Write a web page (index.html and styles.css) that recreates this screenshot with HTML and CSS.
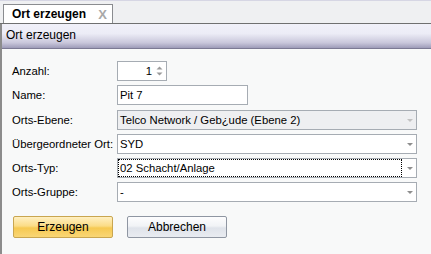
FILE: index.html
```html
<!DOCTYPE html>
<html lang="de">
<head>
    <meta charset="UTF-8">
    <title>Ort erzeugen</title>
    <link rel="stylesheet" href="styles.css">
</head>
<body>
    <div class="tabstrip">
        <div class="tab">
            <span class="tab-title">Ort erzeugen</span>
            <span class="tab-close">X</span>
        </div>
    </div>
    <div class="panel">
        <div class="panel-header">Ort erzeugen</div>
        <form class="panel-body">
            <div class="rows">
                <div class="row">
                    <label>Anzahl:</label>
                    <div class="box spinner">
                        <span class="spin-value">1</span>
                        <span class="spin-arrows">
                            <svg width="7" height="12" viewBox="0 0 7 12">
                                <path d="M0.5 4.5 L3.5 1.5 L6.5 4.5 Z" fill="#9a9a9a"/>
                                <path d="M0.5 7.5 L3.5 10.5 L6.5 7.5 Z" fill="#9a9a9a"/>
                            </svg>
                        </span>
                    </div>
                </div>
                <div class="row">
                    <label>Name:</label>
                    <div class="box name">Pit 7</div>
                </div>
                <div class="row ebene">
                    <label>Orts-Ebene:</label>
                    <div class="box combo disabled">
                        <span class="combo-text">Telco Network / Geb¿ude (Ebene 2)</span>
                        <span class="arrow"></span>
                    </div>
                </div>
                <div class="row">
                    <label>Übergeordneter Ort:</label>
                    <div class="box combo">
                        <span class="combo-text">SYD</span>
                        <span class="arrow"></span>
                    </div>
                </div>
                <div class="row">
                    <label>Orts-Typ:</label>
                    <div class="box combo">
                        <span class="combo-text focused">02 Schacht/Anlage</span>
                        <span class="arrow"></span>
                    </div>
                </div>
                <div class="row">
                    <label>Orts-Gruppe:</label>
                    <div class="box combo">
                        <span class="combo-text">-</span>
                        <span class="arrow"></span>
                    </div>
                </div>
            </div>
            <div class="buttons">
                <button type="button" class="btn btn-primary">Erzeugen</button>
                <button type="button" class="btn">Abbrechen</button>
            </div>
        </form>
    </div>
</body>
</html>
```

FILE: styles.css
```css
body {
    margin: 0;
    width: 431px;
    height: 254px;
    overflow: hidden;
    font-family: "Liberation Sans", Arial, sans-serif;
    font-size: 11.3px;
    color: #000;
    background-color: #f8f9f9;
}

.tabstrip {
    height: 20px;
    padding-top: 2px;
    padding-left: 3px;
    background-color: #eff0f2;
    border-top: 1px solid #d6d6e4;
    border-bottom: 1px solid #6f7070;
    display: flex;
    align-items: flex-end;
}

.tab {
    width: 110px;
    height: 19px;
    box-sizing: border-box;
    background-color: #fff;
    border: 1px solid #8a8c90;
    border-bottom: none;
    display: flex;
    align-items: center;
    padding-left: 8px;
}

.tab-title {
    font-weight: bold;
    font-size: 12px;
    flex: 1;
}

.tab-close {
    color: #a8a8a8;
    font-weight: bold;
    font-size: 13px;
    margin-right: 5px;
}

.panel {
    border-left: 2px solid #8c8c8c;
    height: 231px;
}

.panel-header {
    height: 24px;
    line-height: 23px;
    padding-left: 4px;
    font-size: 12px;
    background: linear-gradient(#f1f1f9 0%, #ececf6 40%, #c9c7db 78%, #9e9cb9 100%);
    border-bottom: 1px solid #7c7a94;
}

.panel-body {
    padding: 12px 0 0 10px;
}

.rows {
    display: flex;
    flex-direction: column;
    gap: 4px;
}

.row {
    display: flex;
    align-items: center;
    height: 20px;
}

.row.ebene {
    margin-top: 1px;
}

.row label {
    width: 105px;
}

.box {
    height: 20px;
    box-sizing: border-box;
    border: 1px solid #a6acb3;
    background-color: #fff;
    display: flex;
    align-items: center;
}

.spinner {
    width: 50px;
    justify-content: flex-end;
}

.spin-value {
    margin-right: 4px;
}

.spin-arrows {
    display: flex;
    margin-right: 3px;
}

.name {
    width: 131px;
    padding-left: 2px;
}

.combo {
    width: 300px;
}

.combo.disabled {
    background-color: #eeeff1;
}

.combo-text {
    flex: 1;
    padding-left: 1px;
    height: 18px;
    line-height: 16px;
    margin-right: 5px;
    box-sizing: border-box;
    border: 1px solid transparent;
}

.combo-text.focused {
    border: 1px dotted #000;
}

.arrow {
    width: 0;
    height: 0;
    border-left: 3px solid transparent;
    border-right: 3px solid transparent;
    border-top: 3px solid #8e8e8e;
    margin-right: 3px;
}

.combo.disabled .arrow {
    border-top-color: #c2c2c2;
}

.buttons {
    display: flex;
    gap: 14px;
    margin-top: 14px;
    padding-left: 1px;
}

.btn {
    width: 100px;
    height: 22px;
    font-family: "Liberation Sans", Arial, sans-serif;
    font-size: 12px;
    color: #000;
    border: 1px solid #8f96a2;
    border-radius: 2px;
    background: linear-gradient(#fdfdfe 0%, #f1f3f6 45%, #dfe3ea 55%, #e9ecf1 100%);
    padding: 0;
}

.btn-primary {
    border-color: #c9a650;
    background: linear-gradient(#fff0c2 0%, #fbdc86 45%, #f6c951 55%, #f9d676 100%);
}
```
